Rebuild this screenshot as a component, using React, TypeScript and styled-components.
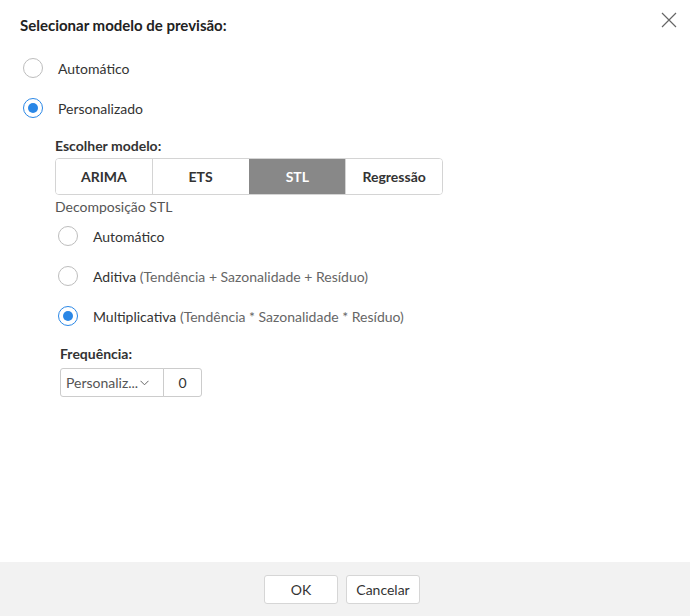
import React, { useState } from "react";
import styled, { createGlobalStyle, css } from "styled-components";

const GlobalStyle = createGlobalStyle`
  html, body {
    margin: 0;
    padding: 0;
    background: #fff;
  }
  body {
    font-family: Lato, "Open Sans", Arial, sans-serif;
    color: #333;
  }
`;

const MODELS = ["ARIMA", "ETS", "STL", "Regressão"];

const DECOMPOSITIONS = [
  { label: "Automático", hint: "" },
  { label: "Aditiva", hint: "(Tendência + Sazonalidade + Resíduo)" },
  { label: "Multiplicativa", hint: "(Tendência * Sazonalidade * Resíduo)" },
];

const App = () => {
  const [mode, setMode] = useState("custom");
  const [model, setModel] = useState("STL");
  const [decomp, setDecomp] = useState(2);

  return (
    <>
      <GlobalStyle />
      <Dialog>
        <Body>
          <Header>
            <Title>Selecionar modelo de previsão:</Title>
            <CloseButton aria-label="Fechar">
              <svg width="16" height="16" viewBox="0 0 16 16">
                <path d="M1 1 L15 15 M15 1 L1 15" stroke="#666" strokeWidth="1.2" fill="none" />
              </svg>
            </CloseButton>
          </Header>

          <RadioRow onClick={() => setMode("auto")}>
            <Radio checked={mode === "auto"} />
            <Label>Automático</Label>
          </RadioRow>
          <RadioRow onClick={() => setMode("custom")}>
            <Radio checked={mode === "custom"} />
            <Label>Personalizado</Label>
          </RadioRow>

          <SubSection>
            <FieldTitle>Escolher modelo:</FieldTitle>
            <Segmented>
              {MODELS.map((m) => (
                <Segment key={m} active={model === m} onClick={() => setModel(m)}>
                  {m}
                </Segment>
              ))}
            </Segmented>
            <Caption>Decomposição STL</Caption>

            {DECOMPOSITIONS.map((d, i) => (
              <RadioRow key={d.label} indent={3} onClick={() => setDecomp(i)}>
                <Radio checked={decomp === i} />
                <Label>
                  {d.label}
                  {d.hint && <Hint> {d.hint}</Hint>}
                </Label>
              </RadioRow>
            ))}

            <Frequency>
              <FieldTitle>Frequência:</FieldTitle>
              <InputGroup>
                <Select>
                  <span>Personaliz...</span>
                  <svg width="9" height="6" viewBox="0 0 9 6">
                    <path d="M0.5 0.8 L4.5 4.8 L8.5 0.8" stroke="#666" strokeWidth="1" fill="none" />
                  </svg>
                </Select>
                <NumberBox>0</NumberBox>
              </InputGroup>
            </Frequency>
          </SubSection>
        </Body>

        <Footer>
          <FooterButton>OK</FooterButton>
          <FooterButton>Cancelar</FooterButton>
        </Footer>
      </Dialog>
    </>
  );
};

export default App;

const Dialog = styled.div`
  display: flex;
  flex-direction: column;
  width: 690px;
  height: 616px;
  background: #fff;
`;

const Body = styled.div`
  flex: 1;
  padding: 15px 13px 0 20px;
`;

const Header = styled.div`
  display: flex;
  justify-content: space-between;
  align-items: flex-start;
  margin-bottom: 13px;
`;

const Title = styled.h2`
  margin: 0;
  font-size: 15px;
  line-height: 20px;
  font-weight: 700;
  color: #222;
`;

const CloseButton = styled.button`
  display: flex;
  padding: 0;
  margin-top: -3px;
  border: none;
  background: none;
  cursor: pointer;
`;

const RadioRow = styled.div<{ indent?: number }>`
  display: flex;
  align-items: center;
  gap: 15px;
  height: 40px;
  padding-left: ${({ indent }) => indent ?? 3}px;
  cursor: pointer;
`;

const Radio = styled.span<{ checked: boolean }>`
  position: relative;
  box-sizing: border-box;
  width: 20px;
  height: 20px;
  border-radius: 50%;
  border: 1.5px solid #bdbdbd;
  background: #fff;
  flex-shrink: 0;

  ${({ checked }) =>
    checked &&
    css`
      border-color: #2a87e6;
      &::after {
        content: "";
        position: absolute;
        top: 50%;
        left: 50%;
        width: 10px;
        height: 10px;
        margin: -5px 0 0 -5px;
        border-radius: 50%;
        background: #2a87e6;
      }
    `}
`;

const Label = styled.span`
  font-size: 14px;
  color: #333;
`;

const Hint = styled.span`
  color: #666;
`;

const SubSection = styled.div`
  margin: 9px 0 0 35px;
`;

const FieldTitle = styled.div`
  font-size: 14px;
  line-height: 18px;
  font-weight: 700;
  color: #333;
`;

const Segmented = styled.div`
  display: flex;
  width: 388px;
  height: 37px;
  margin-top: 3px;
  box-sizing: border-box;
  border: 1px solid #d4d4d4;
  border-radius: 4px;
  overflow: hidden;
`;

const Segment = styled.button<{ active: boolean }>`
  flex: 1;
  padding: 0;
  border: none;
  border-left: 1px solid #d4d4d4;
  background: #fff;
  font-family: inherit;
  font-size: 14px;
  font-weight: 700;
  color: #333;
  cursor: pointer;

  &:first-child {
    border-left: none;
  }

  ${({ active }) =>
    active &&
    css`
      background: #888;
      border-left-color: #888;
      color: #fff;
    `}
`;

const Caption = styled.div`
  margin-top: 3px;
  font-size: 14px;
  line-height: 18px;
  color: #555;
`;

const Frequency = styled.div`
  margin: 9px 0 0 5px;
`;

const InputGroup = styled.div`
  display: flex;
  margin-top: 5px;
  height: 29px;
`;

const Select = styled.div`
  display: flex;
  align-items: center;
  gap: 2px;
  box-sizing: border-box;
  width: 104px;
  padding: 0 5px;
  border: 1px solid #ccc;
  border-radius: 3px 0 0 3px;
  font-size: 14px;
  color: #555;
  white-space: nowrap;
  overflow: hidden;
`;

const NumberBox = styled.div`
  display: flex;
  align-items: center;
  justify-content: center;
  box-sizing: border-box;
  width: 39px;
  margin-left: -1px;
  border: 1px solid #ccc;
  border-radius: 0 3px 3px 0;
  font-size: 14px;
  color: #333;
`;

const Footer = styled.div`
  display: flex;
  justify-content: center;
  align-items: center;
  gap: 8px;
  height: 54px;
  padding-right: 6px;
  background: #f2f2f2;
`;

const FooterButton = styled.button`
  width: 74px;
  height: 29px;
  border: 1px solid #d6d6d6;
  border-radius: 3px;
  background: #fff;
  font-family: inherit;
  font-size: 14px;
  color: #333;
  cursor: pointer;
`;
